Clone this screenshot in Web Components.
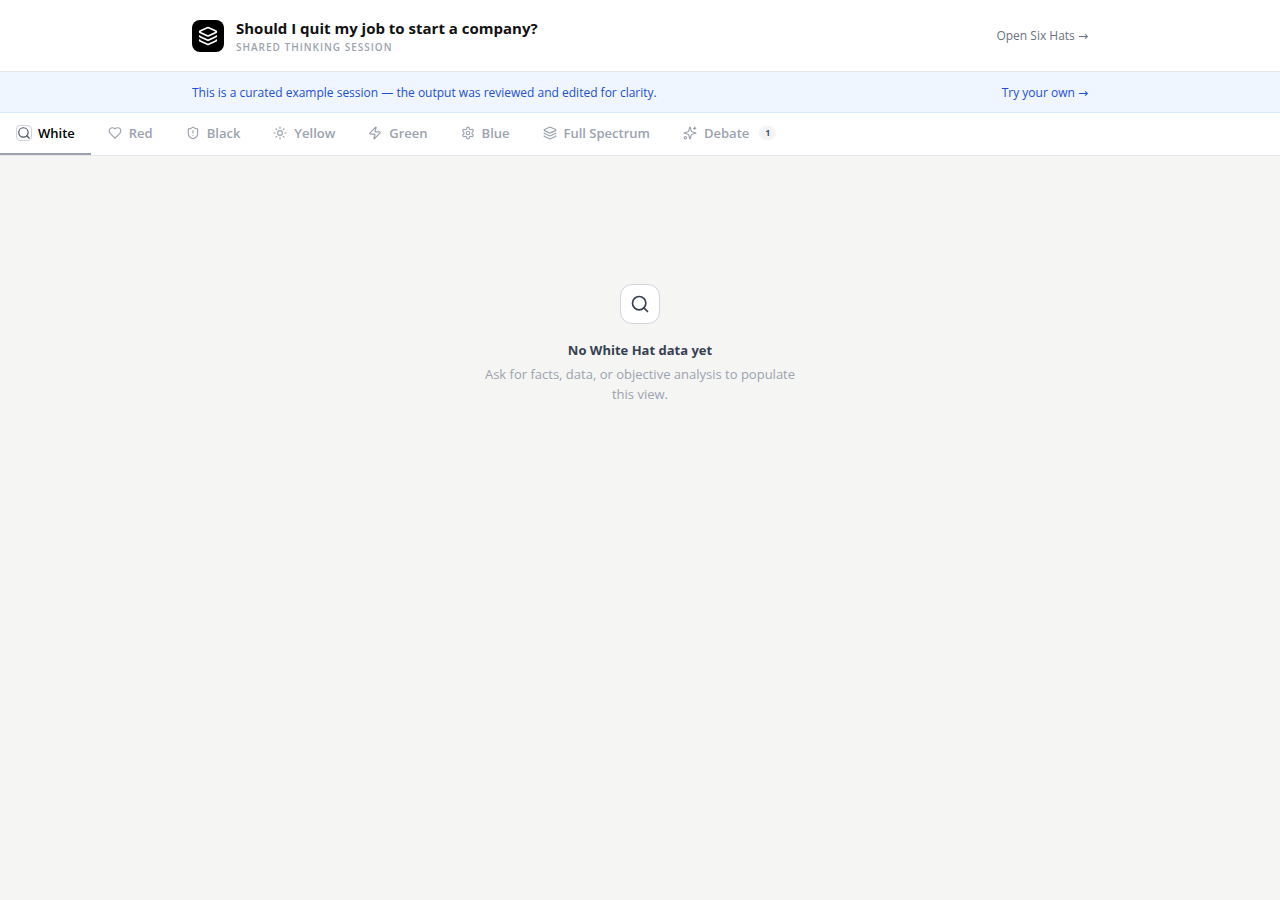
<!DOCTYPE html>
<html lang="en">
<head>
<meta charset="utf-8">
<meta name="viewport" content="width=device-width, initial-scale=1">
<title>Should I quit my job to start a company?</title>
<style>
  body { margin: 0; background: #f5f5f4; font-family: "Open Sans", "Noto Sans", sans-serif; color: #000; }
</style>
</head>
<body>
<session-page></session-page>

<script>
const ICONS = {
  layers: '<path d="m12.83 2.18a2 2 0 0 0-1.66 0L2.6 6.08a1 1 0 0 0 0 1.83l8.58 3.91a2 2 0 0 0 1.66 0l8.58-3.9a1 1 0 0 0 0-1.83Z"/><path d="M2 12a1 1 0 0 0 .58.91l8.6 3.91a2 2 0 0 0 1.65 0l8.58-3.9A1 1 0 0 0 22 12"/><path d="M2 17a1 1 0 0 0 .58.91l8.6 3.91a2 2 0 0 0 1.65 0l8.58-3.9A1 1 0 0 0 22 17"/>',
  search: '<circle cx="11" cy="11" r="8"/><path d="m21 21-4.3-4.3"/>',
  heart: '<path d="M19 14c1.49-1.46 3-3.21 3-5.5A5.5 5.5 0 0 0 16.5 3c-1.76 0-3 .5-4.5 2-1.5-1.5-2.74-2-4.5-2A5.5 5.5 0 0 0 2 8.5c0 2.3 1.5 4.05 3 5.5l7 7Z"/>',
  shield: '<path d="M20 13c0 5-3.5 7.5-7.66 8.95a1 1 0 0 1-.67-.01C7.5 20.5 4 18 4 13V6a1 1 0 0 1 1-1c2 0 4.5-1.2 6.24-2.72a1.17 1.17 0 0 1 1.52 0C14.51 3.81 17 5 19 5a1 1 0 0 1 1 1z"/><path d="M12 8v4"/><path d="M12 16h.01"/>',
  sun: '<circle cx="12" cy="12" r="4"/><path d="M12 2v2"/><path d="M12 20v2"/><path d="m4.93 4.93 1.41 1.41"/><path d="m17.66 17.66 1.41 1.41"/><path d="M2 12h2"/><path d="M20 12h2"/><path d="m6.34 17.66-1.41 1.41"/><path d="m19.07 4.93-1.41 1.41"/>',
  zap: '<path d="M4 14a1 1 0 0 1-.78-1.63l9.9-10.2a.5.5 0 0 1 .86.46l-1.92 6.02A1 1 0 0 0 13 10h7a1 1 0 0 1 .78 1.63l-9.9 10.2a.5.5 0 0 1-.86-.46l1.92-6.02A1 1 0 0 0 11 14z"/>',
  settings: '<path d="M12.22 2h-.44a2 2 0 0 0-2 2v.18a2 2 0 0 1-1 1.73l-.43.25a2 2 0 0 1-2 0l-.15-.08a2 2 0 0 0-2.73.73l-.22.38a2 2 0 0 0 .73 2.73l.15.1a2 2 0 0 1 1 1.72v.51a2 2 0 0 1-1 1.74l-.15.09a2 2 0 0 0-.73 2.73l.22.38a2 2 0 0 0 2.73.73l.15-.08a2 2 0 0 1 2 0l.43.25a2 2 0 0 1 1 1.73V20a2 2 0 0 0 2 2h.44a2 2 0 0 0 2-2v-.18a2 2 0 0 1 1-1.73l.43-.25a2 2 0 0 1 2 0l.15.08a2 2 0 0 0 2.73-.73l.22-.39a2 2 0 0 0-.73-2.73l-.15-.08a2 2 0 0 1-1-1.74v-.5a2 2 0 0 1 1-1.74l.15-.09a2 2 0 0 0 .73-2.73l-.22-.38a2 2 0 0 0-2.73-.73l-.15.08a2 2 0 0 1-2 0l-.43-.25a2 2 0 0 1-1-1.73V4a2 2 0 0 0-2-2z"/><circle cx="12" cy="12" r="3"/>',
  sparkles: '<path d="M9.937 15.5A2 2 0 0 0 8.5 14.063l-6.135-1.582a.5.5 0 0 1 0-.962L8.5 9.936A2 2 0 0 0 9.937 8.5l1.582-6.135a.5.5 0 0 1 .963 0L14.063 8.5A2 2 0 0 0 15.5 9.937l6.135 1.581a.5.5 0 0 1 0 .964L15.5 14.063a2 2 0 0 0-1.437 1.437l-1.582 6.135a.5.5 0 0 1-.963 0z"/><path d="M20 2v4"/><path d="M22 4h-4"/><circle cx="4" cy="20" r="2"/>'
};

class ViewElement extends HTMLElement {
  connectedCallback() {
    if (!this.shadowRoot) this.attachShadow({ mode: 'open' }).innerHTML = this.view();
  }
}

customElements.define('line-icon', class extends ViewElement {
  view() {
    return `<style>
      :host { display: block; flex: none; width: 14px; height: 14px; }
      svg { display: block; width: 100%; height: 100%; }
    </style>
    <svg viewBox="0 0 24 24" fill="none" stroke="currentColor" stroke-width="2" stroke-linecap="round" stroke-linejoin="round" aria-hidden="true">${ICONS[this.getAttribute('name')]}</svg>`;
  }
});

customElements.define('session-header', class extends ViewElement {
  view() {
    return `<style>
      :host { display: block; background: #fff; border-bottom: 1px solid #e5e7eb; }
      header { display: flex; align-items: center; gap: 12px; max-width: 896px; margin: 0 auto; padding: 16px 24px; }
      .logo { display: grid; place-items: center; flex: none; width: 32px; height: 32px; border-radius: 8px; background: #000; color: #fff; }
      .logo line-icon { width: 20px; height: 20px; }
      h1 { margin: 0; font-size: 15px; line-height: 24px; font-weight: 700; color: #111; }
      p { margin: 0; font-size: 10px; line-height: 15px; font-weight: 600; letter-spacing: 1px; text-transform: uppercase; color: #9ca3af; }
      a { margin-left: auto; font-size: 12px; line-height: 20px; color: #6b7280; text-decoration: none; white-space: nowrap; }
      .arrow { font-family: "DejaVu Sans", sans-serif; }
    </style>
    <header>
      <div class="logo"><line-icon name="layers"></line-icon></div>
      <div><h1><slot></slot></h1><p><slot name="subtitle"></slot></p></div>
      <a href="#">Open Six Hats <span class="arrow">→</span></a>
    </header>`;
  }
});

customElements.define('example-banner', class extends ViewElement {
  view() {
    return `<style>
      :host { display: block; background: #eff6ff; border-bottom: 1px solid #dbeafe; font-size: 12px; line-height: 18px; font-weight: 500; color: #1d4ed8; }
      div { display: flex; justify-content: space-between; gap: 16px; max-width: 896px; margin: 0 auto; padding: 12px 24px 10px; }
      a { color: inherit; text-decoration: none; white-space: nowrap; }
      .arrow { font-family: "DejaVu Sans", sans-serif; }
    </style>
    <div><span><slot></slot></span><a href="#">Try your own <span class="arrow">→</span></a></div>`;
  }
});

customElements.define('hat-tab', class extends ViewElement {
  view() {
    const count = this.getAttribute('count');
    return `<style>
      :host { display: block; flex: none; }
      button { display: flex; align-items: center; gap: 6px; margin: 0; padding: 10px 16px; border: 0; border-bottom: 2px solid transparent; background: none; font: 600 13px/20px "Open Sans", "Noto Sans", sans-serif; color: #9ca3af; white-space: nowrap; cursor: pointer; }
      .icon { display: grid; place-items: center; box-sizing: border-box; width: 16px; height: 16px; }
      :host([active]) button { color: #000; border-color: #9ca3af; }
      :host([active]) .icon { border: 1px solid #d1d5db; border-radius: 4px; color: #4b5563; }
      .count { margin-left: 4px; padding: 0 6px; border-radius: 7px; background: #f3f4f6; color: #4b5563; font-size: 9px; line-height: 14px; font-weight: 700; }
    </style>
    <button type="button"><span class="icon"><line-icon name="${this.getAttribute('icon')}"></line-icon></span><span><slot></slot></span>${count ? `<span class="count">${count}</span>` : ''}</button>`;
  }
});

customElements.define('hat-tabs', class extends ViewElement {
  view() {
    return `<style>
      :host { display: block; background: #fff; border-bottom: 1px solid #e5e7eb; }
      nav { display: flex; overflow-x: auto; scrollbar-width: none; }
    </style>
    <nav aria-label="Hats"><slot></slot></nav>`;
  }
});

customElements.define('empty-state', class extends ViewElement {
  view() {
    return `<style>
      :host { display: flex; flex-direction: column; align-items: center; padding: 128px 24px; text-align: center; }
      .tile { display: grid; place-items: center; box-sizing: border-box; width: 40px; height: 40px; margin-bottom: 16px; border: 1px solid #d1d5db; border-radius: 12px; background: #fff; color: #374151; }
      .tile line-icon { width: 20px; height: 20px; }
      h2 { margin: 0 0 4px; font-size: 13px; line-height: 20px; font-weight: 700; color: #374151; }
      p { margin: 0; max-width: 320px; font-size: 13px; line-height: 20px; color: #9ca3af; }
    </style>
    <div class="tile"><line-icon name="search"></line-icon></div>
    <h2><slot name="title"></slot></h2>
    <p><slot></slot></p>`;
  }
});

customElements.define('session-page', class extends ViewElement {
  view() {
    return `<style>:host { display: block; min-height: 100vh; }</style>
    <session-header>Should I quit my job to start a company?<span slot="subtitle">Shared thinking session</span></session-header>
    <example-banner>This is a curated example session — the output was reviewed and edited for clarity.</example-banner>
    <hat-tabs>
      <hat-tab icon="search" active>White</hat-tab>
      <hat-tab icon="heart">Red</hat-tab>
      <hat-tab icon="shield">Black</hat-tab>
      <hat-tab icon="sun">Yellow</hat-tab>
      <hat-tab icon="zap">Green</hat-tab>
      <hat-tab icon="settings">Blue</hat-tab>
      <hat-tab icon="layers">Full Spectrum</hat-tab>
      <hat-tab icon="sparkles" count="1">Debate</hat-tab>
    </hat-tabs>
    <main><empty-state><span slot="title">No White Hat data yet</span>Ask for facts, data, or objective analysis to populate this view.</empty-state></main>`;
  }
});
</script>
</body>
</html>
